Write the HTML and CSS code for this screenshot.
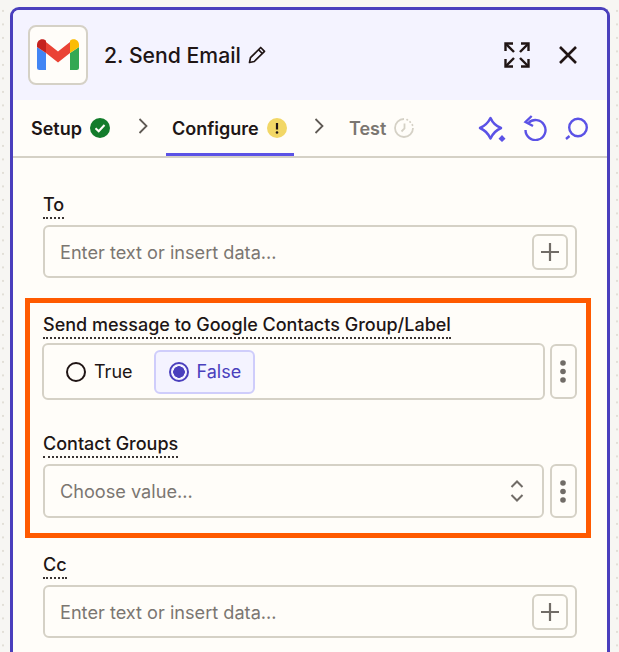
FILE: index.html
```html
<!DOCTYPE html>
<html lang="en">
<head>
<meta charset="utf-8">
<title>Send Email</title>
<link rel="stylesheet" href="styles.css">
</head>
<body>
<main class="panel">
  <header class="head">
    <div class="app-icon">
      <svg width="44" height="32" viewBox="0 0 44 32">
        <path d="M1 8V28.500Q1 31 3.500 31H10V14Z" fill="#4285f4"/>
        <path d="M34 14V31H40.500Q43 31 43 28.500V8Z" fill="#34a853"/>
        <path d="M10 3 22 12.500 34 3V14L22 23.500 10 14Z" fill="#ea4335"/>
        <path d="M1 8V6C1 1 6 -1.500 10 1.800V14Z" fill="#c5221f"/>
        <path d="M34 1.800C38 -1.500 43 1 43 6V8L34 14Z" fill="#fbbc04"/>
      </svg>
    </div>
    <h1 class="title">2. Send Email</h1>
    <svg class="pencil" width="20" height="20" viewBox="0 0 20 20" fill="none" stroke="#201515" stroke-width="1.700" stroke-linejoin="round"><path d="M2.500 17.500 3.500 12.700 13.700 2.500 17.500 6.300 7.300 16.500Z"/><path d="M11.500 4.700 15.300 8.500"/></svg>
    <div class="head-actions">
      <svg width="26" height="26" viewBox="0 0 26 26" fill="none" stroke="#201515" stroke-width="2.400"><path d="M1.500 9V1.500H9"/><path d="M2 2 10 10"/><path d="M24.500 9V1.500H17"/><path d="M24 2 16 10"/><path d="M1.500 17V24.500H9"/><path d="M2 24 10 16"/><path d="M24.500 17V24.500H17"/><path d="M24 24 16 16"/></svg>
      <svg width="18" height="18" viewBox="0 0 18 18" fill="none" stroke="#201515" stroke-width="2.600"><path d="M1 1 17 17M17 1 1 17"/></svg>
    </div>
  </header>

  <nav class="tabs">
    <div class="tab tab-setup">
      <span>Setup</span>
      <svg width="20" height="20" viewBox="0 0 20 20"><circle cx="10" cy="10" r="10" fill="#137c2b"/><path d="M5.500 10.300 8.700 13.300 14.500 7" fill="none" stroke="#fffdf9" stroke-width="2"/></svg>
    </div>
    <svg class="chev chev-one" width="10" height="16" viewBox="0 0 10 16" fill="none" stroke="#5f5a55" stroke-width="1.800"><path d="M1.500 1 8.500 8 1.500 15"/></svg>
    <div class="tab tab-active">
      <span>Configure</span>
      <svg width="20" height="20" viewBox="0 0 20 20"><circle cx="10" cy="10" r="10" fill="#f2d766"/><path d="M10 5V11.500" stroke="#201515" stroke-width="2.200"/><circle cx="10" cy="14.500" r="1.300" fill="#201515"/></svg>
    </div>
    <svg class="chev chev-two" width="10" height="16" viewBox="0 0 10 16" fill="none" stroke="#5f5a55" stroke-width="1.800"><path d="M1.500 1 8.500 8 1.500 15"/></svg>
    <div class="tab tab-muted">
      <span>Test</span>
      <svg width="20" height="20" viewBox="0 0 20 20" fill="none" stroke="#d5d1c6" stroke-width="1.800"><path d="M10 1A9 9 0 1 0 19 10"/><path d="M13 1.600 13.400 1.800M16 3.800 16.300 4.100M18.300 6.800 18.500 7.200" stroke-linecap="round"/><path d="M10.500 5.500V10.500L7.500 13.500"/></svg>
    </div>
    <div class="tools">
      <svg width="28" height="27" viewBox="0 0 28 27" fill="none" stroke="#5b52e6" stroke-width="2.500" stroke-linejoin="round"><path d="M12.500 3Q15.500 10 23 13 16 16 12.500 23.500 9 16 2 13 9 10 12.500 3Z"/><path d="M24 20 27.500 23.700 24 27 20.500 23.700Z" fill="#5b52e6" stroke="none"/></svg>
      <svg width="25" height="26" viewBox="0 0 25 26" fill="none" stroke="#5b52e6" stroke-width="2.400"><path d="M5.400 8A10 10 0 1 1 2.500 15"/><path d="M8.700 1 2.500 7 10 11"/></svg>
      <svg width="24" height="24" viewBox="0 0 24 24" fill="none" stroke="#5b52e6" stroke-width="2.400"><circle cx="13" cy="11.500" r="8.800"/><path d="M1 23 4.500 20"/></svg>
    </div>
  </nav>

  <section class="form">
    <div class="field">
      <label class="label">To</label>
      <div class="input">
        <span class="placeholder">Enter text or insert data...</span>
        <span class="plus"><svg width="18" height="18" viewBox="0 0 18 18" stroke="#716c67" stroke-width="2.200"><path d="M9 0V18M0 9H18"/></svg></span>
      </div>
    </div>

    <div class="highlight">
      <div class="field field-radio">
        <label class="label">Send message to Google Contacts Group/Label</label>
        <div class="row">
          <div class="radios">
            <span class="radio"><i class="dot"></i>True</span>
            <span class="radio radio-on"><i class="dot dot-on"></i>False</span>
          </div>
          <span class="more more-inset"><svg width="6" height="23" viewBox="0 0 6 23" fill="#716c67"><circle cx="3" cy="3" r="2.800"/><circle cx="3" cy="11.500" r="2.800"/><circle cx="3" cy="20" r="2.800"/></svg></span>
        </div>
      </div>
      <div class="field">
        <label class="label">Contact Groups</label>
        <div class="row">
          <div class="input input-select">
            <span class="placeholder">Choose value...</span>
            <svg width="14" height="22" viewBox="0 0 14 22" fill="none" stroke="#716c67" stroke-width="2"><path d="M1.500 7 7 1.500 12.500 7"/><path d="M1.500 15 7 20.500 12.500 15"/></svg>
          </div>
          <span class="more"><svg width="6" height="23" viewBox="0 0 6 23" fill="#716c67"><circle cx="3" cy="3" r="2.800"/><circle cx="3" cy="11.500" r="2.800"/><circle cx="3" cy="20" r="2.800"/></svg></span>
        </div>
      </div>
    </div>

    <div class="field">
      <label class="label">Cc</label>
      <div class="input">
        <span class="placeholder">Enter text or insert data...</span>
        <span class="plus"><svg width="18" height="18" viewBox="0 0 18 18" stroke="#716c67" stroke-width="2.200"><path d="M9 0V18M0 9H18"/></svg></span>
      </div>
    </div>
  </section>
</main>
</body>
</html>
```

FILE: styles.css
```css
* {
  box-sizing: border-box;
}

html,
body {
  height: 100%;
}

body {
  margin: 0;
  overflow: hidden;
  padding: 7px 9px 0 10px;
  font-family: Inter, "Liberation Sans", sans-serif;
  color: #201515;
  background-color: #f7f6f3;
  background-image: radial-gradient(circle at 3px 3px, #e2dfd7 0.9px, transparent 1.2px);
  background-position: 0 8px;
  background-size: 614px 13.500px;
}

.panel {
  height: 645px;
  background: #fffdf9;
  border: 3px solid #4a3fbd;
  border-bottom: 0;
  border-radius: 9px 9px 0 0;
  overflow: hidden;
}

.head {
  display: flex;
  align-items: center;
  height: 90px;
  padding: 0 30px 0 15px;
  background: #f4f3ff;
}

.app-icon {
  display: flex;
  align-items: center;
  justify-content: center;
  width: 60px;
  height: 60px;
  background: #fffdf9;
  border: 2px solid #d5d1c6;
  border-radius: 8px;
}

.title {
  margin: 0 6px 0 16px;
  font-size: 21.200px;
  font-weight: 500;
  line-height: 28px;
}

.pencil {
  flex: none;
}

.head-actions {
  display: flex;
  align-items: center;
  gap: 29px;
  margin-left: auto;
}

.tabs {
  display: flex;
  align-items: center;
  height: 58px;
  padding: 0 18px;
  border-bottom: 2px solid #d5d1c6;
}

.tab {
  display: flex;
  align-items: center;
  gap: 8px;
  height: 56px;
  font-size: 18px;
  font-weight: 600;
}

.tab-setup {
  width: 80px;
}

.chev-one {
  margin: -4px 0 0 27px;
}

.tab-active {
  width: 128px;
  margin-left: 18px;
  padding: 3px 6px 0;
  border-bottom: 3px solid #5b52e6;
}

.chev-two {
  margin: -4px 0 0 20px;
}

.tab-muted {
  margin-left: 25px;
  color: #7b7671;
}

.tools {
  display: flex;
  align-items: center;
  gap: 17px;
  margin-left: auto;
}

.form {
  padding: 34px 30px 0;
}

.field {
  display: flex;
  flex-direction: column;
  align-items: flex-start;
  gap: 6px;
}

.field-radio {
  gap: 4px;
}

.label {
  height: 27px;
  padding-top: 1px;
  font-size: 18px;
  font-weight: 500;
  line-height: 24px;
  border-bottom: 2px dotted #3a3432;
}

.input {
  display: flex;
  align-items: center;
  justify-content: space-between;
  width: 100%;
  height: 53px;
  padding: 0 7px 0 15px;
  border: 2px solid #d5d1c6;
  border-radius: 6px;
}

.placeholder {
  font-size: 18.150px;
  color: #7b7671;
}

.plus {
  display: flex;
  align-items: center;
  justify-content: center;
  width: 36px;
  height: 36px;
  border: 2px solid #d5d1c6;
  border-radius: 6px;
}

.highlight {
  display: flex;
  flex-direction: column;
  gap: 31px;
  margin: 20px -14px 14px -18px;
  padding: 9px 9px 15px 13px;
  border: 5px solid #ff5a00;
}

.row {
  display: flex;
  gap: 6px;
  width: 100%;
}

.radios {
  display: flex;
  align-items: center;
  gap: 6px;
  flex: 1;
  height: 57px;
  margin: 0 -1px;
  padding: 0 8px 0 13px;
  border: 2px solid #d5d1c6;
  border-radius: 6px;
}

.radio {
  display: flex;
  align-items: center;
  gap: 8px;
  height: 44px;
  padding: 0 15px 0 9px;
  font-size: 18px;
}

.radio-on {
  padding: 0 12px 0 13px;
  color: #4a3fbd;
  background: #f4f3ff;
  border: 2px solid #cfcdfb;
  border-radius: 6px;
}

.dot {
  width: 20px;
  height: 20px;
  border: 2px solid #201515;
  border-radius: 50%;
}

.dot-on {
  border-color: #4a3fbd;
  background: radial-gradient(circle, #4a3fbd 0 5.500px, transparent 6px);
}

.more {
  display: flex;
  align-items: center;
  justify-content: center;
  flex: none;
  width: 27px;
  padding-right: 1px;
  border: 2px solid #d5d1c6;
  border-radius: 6px;
}

.more-inset {
  margin: 1px 0;
}

.input-select {
  flex: 1;
  width: auto;
  height: 54px;
  padding-right: 18px;
}
```
